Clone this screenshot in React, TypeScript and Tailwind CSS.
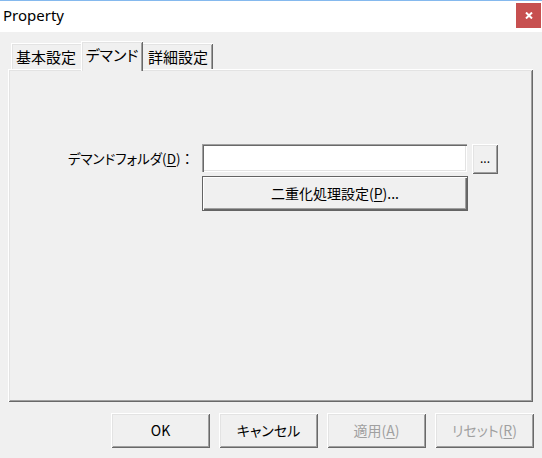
const jp = { fontFamily: '"Noto Sans CJK JP", "Noto Sans", sans-serif', fontFeatureSettings: '"palt"' };

const raised =
  "shadow-[inset_1px_1px_0_#ffffff,inset_-1px_-1px_0_#696969,inset_2px_2px_0_#e3e3e3,inset_-2px_-2px_0_#a0a0a0]";

const Btn = ({ children, disabled }: { children: React.ReactNode; disabled?: boolean }) => (
  <div
    className={`flex h-[35px] w-[99px] items-center justify-center bg-[#f0f0f0] text-[14px] ${raised} ${
      disabled ? "text-[#a0a0a0]" : "text-black"
    }`}
  >
    {children}
  </div>
);

export default function App() {
  return (
    <div className="flex h-[458px] w-[542px] flex-col overflow-hidden bg-[#f0f0f0] text-black" style={jp}>
      {/* title bar */}
      <div className="flex h-[32px] items-start justify-between border-t border-[#85b9ee] bg-white">
        <span className="pl-[3px] pt-[4px] text-[15px] leading-[20px]" style={{ fontFamily: '"Noto Sans", sans-serif' }}>
          Property
        </span>
        <div className="mr-[1px] mt-[2px] flex h-[25px] w-[25px] items-center justify-center bg-[#c75050]">
          <svg width="8" height="7" viewBox="0 0 8 7">
            <path d="M1 0.5 L7 6.5 M7 0.5 L1 6.5" stroke="#fff" strokeWidth="2" />
          </svg>
        </div>
      </div>

      {/* tabs */}
      <div className="relative z-10 mt-[9px] flex items-end pl-[11px]">
        <div className="flex h-[26px] w-[70px] items-center justify-center bg-[#f0f0f0] pt-[2px] text-[15px] shadow-[inset_1px_1px_0_#ffffff,inset_2px_2px_0_#e3e3e3]">
          基本設定
        </div>
        <div className="-mb-[2px] flex h-[30px] w-[62px] items-center justify-center bg-[#f0f0f0] pb-[2px] text-[15px] shadow-[inset_1px_1px_0_#ffffff,inset_-1px_0_0_#696969,inset_2px_2px_0_#e3e3e3,inset_-2px_0_0_#a0a0a0]">
          デマンド
        </div>
        <div className="flex h-[26px] w-[70px] items-center justify-center bg-[#f0f0f0] pt-[2px] text-[15px] shadow-[inset_0_1px_0_#ffffff,inset_-1px_0_0_#696969,inset_0_2px_0_#e3e3e3,inset_-2px_0_0_#a0a0a0]">
          詳細設定
        </div>
      </div>

      {/* panel */}
      <div className={`ml-[8px] mr-[9px] flex h-[333px] flex-col pt-[75px] ${raised}`}>
        <div className="flex items-start">
          <div className="flex h-[28px] w-[194px] items-center justify-end pr-[8px] text-[13.5px]">
            デマンドフォルダ(<span className="underline underline-offset-2">D</span>)
            <span style={{ fontFeatureSettings: "normal" }}>：</span>
          </div>
          <div className="h-[28px] w-[265px] bg-white shadow-[inset_1px_1px_0_#a0a0a0,inset_2px_2px_0_#696969,inset_-1px_-1px_0_#ffffff,inset_-2px_-2px_0_#e3e3e3]" />
          <div className={`ml-[5px] flex h-[30px] w-[26px] items-center justify-center bg-[#f0f0f0] pb-[2px] text-[12px] ${raised}`}>
            ...
          </div>
        </div>
        <div className="ml-[194px] mt-[2px] flex h-[35px] w-[266px] items-center justify-center bg-[#f0f0f0] text-[14px] shadow-[inset_0_0_0_1px_#646464,inset_2px_2px_0_#ffffff,inset_-2px_-2px_0_#696969,inset_-3px_-3px_0_#a0a0a0]">
          二重化処理設定(<span className="underline underline-offset-2">P</span>)...
        </div>
      </div>

      {/* bottom buttons */}
      <div className="mt-[11px] flex justify-end gap-[9px] pr-[8px]">
        <Btn>OK</Btn>
        <Btn>キャンセル</Btn>
        <Btn disabled>
          適用(<span className="underline underline-offset-2">A</span>)
        </Btn>
        <Btn disabled>
          リセット(<span className="underline underline-offset-2">R</span>)
        </Btn>
      </div>
    </div>
  );
}
